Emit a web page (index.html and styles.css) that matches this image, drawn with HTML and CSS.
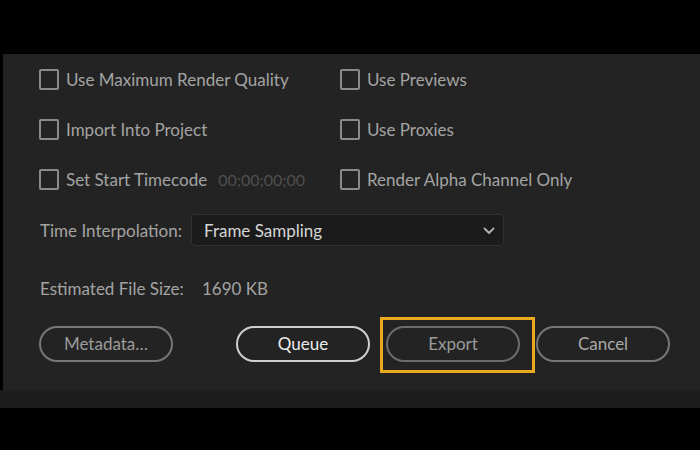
FILE: index.html
```html
<!DOCTYPE html>
<html lang="en">
<head>
  <meta charset="UTF-8">
  <title>Export Settings</title>
  <meta name="viewport" content="width=device-width, initial-scale=1.0">
  <link rel="stylesheet" href="styles.css">
</head>
<body>

  <div class="top-gap"></div>

  <!-- Export panel -->
  <div class="panel">
    <div class="options">
      <label class="opt"><span class="check"></span>Use Maximum Render Quality</label>
      <label class="opt"><span class="check"></span>Use Previews</label>
      <label class="opt"><span class="check"></span>Import Into Project</label>
      <label class="opt"><span class="check"></span>Use Proxies</label>
      <label class="opt"><span class="check"></span>Set Start Timecode <span class="timecode">00;00;00;00</span></label>
      <label class="opt"><span class="check"></span>Render Alpha Channel Only</label>
    </div>

    <div class="field-row">
      <span class="field-label">Time Interpolation:</span>
      <div class="select">
        <span>Frame Sampling</span>
        <svg class="chevron" width="12" height="8" viewBox="0 0 12 8">
          <path d="M1.5 1.5 L6 6 L10.5 1.5" fill="none" stroke="#b0b0b0" stroke-width="1.8" stroke-linecap="round" stroke-linejoin="round"/>
        </svg>
      </div>
    </div>

    <div class="size-row">
      <span class="size-label">Estimated File Size:</span>
      <span>1690 KB</span>
    </div>

    <div class="buttons">
      <button class="btn">Metadata…</button>
      <button class="btn btn-queue">Queue</button>
      <div class="highlight-wrap">
        <button class="btn btn-export">Export</button>
        <div class="highlight"></div>
      </div>
      <button class="btn btn-cancel">Cancel</button>
    </div>
  </div>

  <div class="strip"></div>

</body>
</html>
```

FILE: styles.css
```css
body {
  font-family: 'Lato', 'Open Sans', sans-serif;
  margin: 0;
  padding: 0;
  background: #000;
  width: 700px;
  height: 450px;
  overflow: hidden;
}

.top-gap {
  height: 54px;
}

.panel {
  margin-left: 3px;
  height: 336px;
  padding-left: 36px;
  background: #232323;
  color: #a3a3a3;
  font-size: 17px;
  box-sizing: border-box;
}

.strip {
  height: 18px;
  background: #1d1d1d;
}

.options {
  display: grid;
  grid-template-columns: 301px auto;
  grid-auto-rows: 50px;
}

.opt {
  display: flex;
  align-items: center;
  gap: 7px;
  white-space: nowrap;
}

.check {
  width: 16px;
  height: 17px;
  border: 2px solid #8a8a8a;
  border-radius: 2px;
  flex-shrink: 0;
}

.timecode {
  margin-left: 4px;
  color: #4f4f4f;
  font-size: 16px;
}

.field-row {
  display: flex;
  align-items: center;
  margin-top: 10px;
  height: 32px;
}

.field-label {
  width: 151px;
  padding-left: 1px;
}

.select {
  width: 313px;
  height: 32px;
  box-sizing: border-box;
  display: flex;
  align-items: center;
  justify-content: space-between;
  padding: 0 8px 0 12px;
  background: #1b1b1b;
  border: 1px solid #313131;
  border-radius: 4px;
  color: #d6d6d6;
}

.chevron {
  margin-top: 1px;
}

.size-row {
  display: flex;
  align-items: center;
  height: 24px;
  margin-top: 30px;
}

.size-label {
  width: 162px;
  padding-left: 1px;
}

.buttons {
  display: flex;
  align-items: center;
  margin-top: 26px;
}

.btn {
  width: 134px;
  height: 36px;
  border: 2px solid #777;
  border-radius: 18px;
  background: transparent;
  color: #9b9b9b;
  font-family: inherit;
  font-size: 17px;
  padding: 0 0 2px;
}

.btn-queue {
  margin-left: 63px;
  border-color: #cfcfcf;
  color: #ececec;
}

.highlight-wrap {
  position: relative;
  margin-left: 16px;
  margin-right: 16px;
}

.btn-export {
  display: block;
  border-color: #6c6c6c;
}

.btn-cancel {
  color: #a9a9a9;
}

.highlight {
  position: absolute;
  left: -6px;
  top: -9px;
  width: 155px;
  height: 56px;
  box-sizing: border-box;
  border: 3px solid #e9aa1c;
}
```
